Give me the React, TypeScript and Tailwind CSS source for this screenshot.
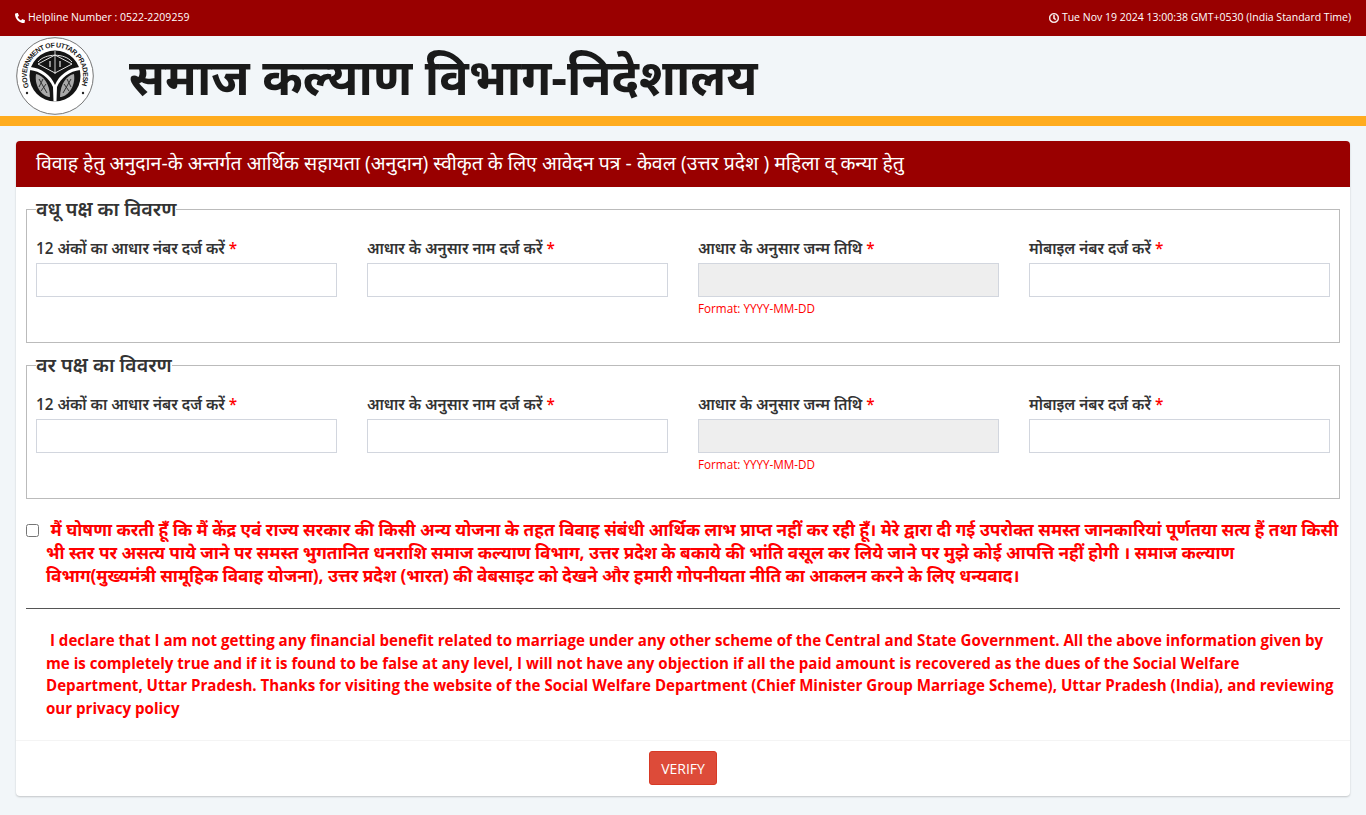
import React from "react";
import { FaPhone, FaRegClock } from "react-icons/fa";

const FONT = "font-['Open_Sans','Noto_Sans',sans-serif]";

function Emblem() {
  return (
    <svg viewBox="0 0 78 78" className="h-[78px] w-[78px]">
      <circle cx="39" cy="39" r="38.3" fill="#fff" stroke="#666" strokeWidth="0.9" />
      <defs>
        <path id="ring" d="M 13.2 50 A 28.2 28.2 0 1 1 64.8 50" />
      </defs>
      <text fontSize="7" fontWeight="700" fill="#222" fontFamily="'Liberation Sans',sans-serif">
        <textPath href="#ring" textLength="110">GOVERNMENT OF UTTAR PRADESH</textPath>
      </text>
      <circle cx="39" cy="39" r="25.5" fill="#141414" />
      <path d="M14.5 30 C25 31 35 38 39 48 C43 38 53 31 63.5 30 L64 33 C54 34 44.5 41 41 50 L40.5 64.5 L37.5 64.5 L37 50 C33.5 41 24 34 14 33 Z" fill="#fff" />
      <path d="M22 27 L39 18 L56 27 L39 36 Z" fill="#141414" stroke="#e5e5e5" strokeWidth="1" />
      <path d="M22 25 C29 16 49 16 56 25" fill="none" stroke="#e5e5e5" strokeWidth="1" />
      <path d="M39 14 V37" stroke="#e5e5e5" strokeWidth="0.9" />
      <path d="M34 24 V30 M44 24 V30" stroke="#e5e5e5" strokeWidth="1.2" />
      <path d="M20 37 C27 38 34 47 34 60 C27 60 18 50 20 37 Z" fill="#a8a8a8" />
      <path d="M58 37 C51 38 44 47 44 60 C51 60 60 50 58 37 Z" fill="#a8a8a8" />
      <path d="M23 42 L31 56 M27 42 L23 50 M30 47 L25 54 M55 42 L47 56 M51 42 L55 50 M48 47 L53 54" stroke="#333" strokeWidth="1" />
      <circle cx="11" cy="56" r="1.2" fill="#222" />
      <circle cx="67" cy="56" r="1.2" fill="#222" />
    </svg>
  );
}

function Field({ label, readOnly }: { label: string; readOnly?: boolean }) {
  return (
    <div className="flex flex-col">
      <label className="h-[26px] text-[15.3px] leading-[22px] font-semibold text-[#333]">
        {label} <span className="text-[#f00]">*</span>
      </label>
      <input
        readOnly={readOnly}
        className={`h-[34px] w-full border border-[#d2d6de] ${readOnly ? "bg-[#eee]" : "bg-white"}`}
      />
      {readOnly && <div className="mt-[3px] text-[11.7px] leading-[16px] text-[#f00]">Format: YYYY-MM-DD</div>}
    </div>
  );
}

function Group({ title, first }: { title: string; first?: boolean }) {
  return (
    <fieldset className={`h-[147px] border border-[#bbb] px-[9px] ${first ? "" : "mt-[9px]"}`}>
      <legend className="text-[19.7px] leading-[26px] font-semibold text-[#333]">{title}</legend>
      <div className="mt-[15px] grid grid-cols-4 gap-x-[30px]">
        <Field label="12 अंकों का आधार नंबर दर्ज करें" />
        <Field label="आधार के अनुसार नाम दर्ज करें" />
        <Field label="आधार के अनुसार जन्म तिथि" readOnly />
        <Field label="मोबाइल नंबर दर्ज करें" />
      </div>
    </fieldset>
  );
}

export default function App() {
  return (
    <div className={`min-h-[815px] bg-[#f2f6f9] ${FONT}`}>
      <div className="flex h-9 items-center justify-between bg-[#990000] px-[15px] text-[10.5px] text-white">
        <div className="flex items-center gap-[3px]"><FaPhone className="h-[10px] w-[10px] -scale-x-100" /> Helpline Number : 0522-2209259</div>
        <div className="flex items-center gap-[3px]"><FaRegClock className="h-[10px] w-[10px] stroke-current stroke-[24]" /> Tue Nov 19 2024 13:00:38 GMT+0530 (India Standard Time)</div>
      </div>
      <div className="flex h-[80px] items-center pl-[16px]">
        <Emblem />
        <h1 className="ml-[35px] text-[48.85px] leading-[80px] font-bold text-[#1a1a1a]">समाज कल्याण विभाग-निदेशालय</h1>
      </div>
      <div className="h-[10px] bg-[#ffac1f]" />
      <div className="mx-[16px] mt-[15px] h-[655px] rounded-[4px] bg-white shadow-[0_1px_2px_rgba(0,0,0,0.2)]">
        <div className="flex h-[46px] items-center rounded-t-[4px] bg-[#990000] pb-[2px] pl-[20px] text-[19.47px] text-white">
          विवाह हेतु अनुदान-के अन्तर्गत आर्थिक सहायता (अनुदान) स्वीकृत के लिए आवेदन पत्र - केवल (उत्तर प्रदेश ) महिला व् कन्या हेतु
        </div>
        <div className="px-[10px] pt-[9px]">
          <Group title="वधू पक्ष का विवरण" first />
          <Group title="वर पक्ष का विवरण" />
          <div className="relative mt-[19px] pl-[20px] text-[17.2px] leading-[23px] font-bold text-[#f00]">
            <input type="checkbox" className="absolute left-0 top-[6px] h-[13px] w-[13px]" />
            &nbsp;मैं घोषणा करती हूँ कि मैं केंद्र एवं राज्य सरकार की किसी अन्य योजना के तहत विवाह संबंधी आर्थिक लाभ प्राप्त नहीं कर रही हूँ। मेरे द्वारा दी गई उपरोक्त समस्त जानकारियां पूर्णतया सत्य हैं तथा किसी<br />
            भी स्तर पर असत्य पाये जाने पर समस्त भुगतानित धनराशि समाज कल्याण विभाग, उत्तर प्रदेश के बकाये की भांति वसूल कर लिये जाने पर मुझे कोई आपत्ति नहीं होगी । समाज कल्याण<br />
            विभाग(मुख्यमंत्री सामूहिक विवाह योजना), उत्तर प्रदेश (भारत) की वेबसाइट को देखने और हमारी गोपनीयता नीति का आकलन करने के लिए धन्यवाद।
          </div>
          <hr className="mt-[21px] border-t border-[#555]" />
          <div className="mt-[20px] pl-[20px] text-[15.1px] leading-[22.5px] font-bold text-[#f00]">
            &nbsp;I declare that I am not getting any financial benefit related to marriage under any other scheme of the Central and State Government. All the above information given by<br />
            me is completely true and if it is found to be false at any level, I will not have any objection if all the paid amount is recovered as the dues of the Social Welfare<br />
            Department, Uttar Pradesh. Thanks for visiting the website of the Social Welfare Department (Chief Minister Group Marriage Scheme), Uttar Pradesh (India), and reviewing<br />
            our privacy policy
          </div>
        </div>
        <div className="mt-[21px] flex justify-center border-t border-[#f4f4f4] pt-[10px]">
          <button className="h-[34px] w-[68px] rounded-[3px] border border-[#d73925] bg-[#dd4b39] text-[14px] text-white">VERIFY</button>
        </div>
      </div>
    </div>
  );
}
